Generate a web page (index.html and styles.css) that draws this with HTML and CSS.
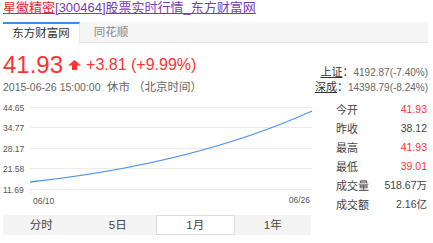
FILE: index.html
```html
<!DOCTYPE html>
<html>
<head>
    <title>星徽精密[300464]股票实时行情_东方财富网</title>
    <link rel="stylesheet" href="styles.css">
</head>
<body>
    <div class="page">
        <div class="title"><a class="name" href="#">星徽精密</a><a class="rest" href="#">[300464]股票实时行情_东方财富网</a></div>

        <div class="tabs">
            <div class="tab active">东方财富网</div>
            <div class="tab">同花顺</div>
        </div>

        <div class="quote">
            <div class="quote-left">
                <div class="price-row">
                    <span class="price">41.93</span>
                    <svg class="arrow" width="13" height="10" viewBox="0 0 13 10">
                        <path d="M6.5 0 L13 5.5 L9 5.5 L9 10 L4 10 L4 5.5 L0 5.5 Z" fill="#f33"/>
                    </svg>
                    <span class="change">+3.81 (+9.99%)</span>
                </div>
                <div class="time"><span class="stamp">2015-06-26 15:00:00</span>&nbsp;&nbsp;休市 （北京时间）</div>
            </div>
            <div class="indices">
                <div class="index"><a href="#">上证</a>：<span class="num">4192.87(-7.40%)</span></div>
                <div class="index"><a href="#">深成</a>：<span class="num">14398.79(-8.24%)</span></div>
            </div>
        </div>

        <div class="main">
            <svg class="chart" width="310" height="119" viewBox="0 0 310 119">
                <g stroke="#ebebeb" stroke-width="1">
                    <line x1="27" y1="11.5" x2="309" y2="11.5"/>
                    <line x1="27" y1="31.5" x2="309" y2="31.5"/>
                    <line x1="27" y1="52.5" x2="309" y2="52.5"/>
                    <line x1="27" y1="72.5" x2="309" y2="72.5"/>
                    <line x1="27" y1="93.5" x2="309" y2="93.5"/>
                    <line x1="28.5" y1="93" x2="28.5" y2="97"/>
                </g>
                <g class="axis">
                    <text x="0" y="14.5">44.65</text>
                    <text x="0" y="34.5">34.77</text>
                    <text x="0" y="55.5">28.17</text>
                    <text x="0" y="75.5">21.58</text>
                    <text x="0" y="96.5">11.69</text>
                    <text x="30" y="108">06/10</text>
                    <text x="307" y="107" text-anchor="end">06/26</text>
                </g>
                <path d="M27 86 C127 75 227 52 309 15" fill="none" stroke="#4f93f2" stroke-width="1.3"/>
            </svg>

            <div class="stats">
                <div class="row"><span>今开</span><span class="up">41.93</span></div>
                <div class="row"><span>昨收</span><span class="val">38.12</span></div>
                <div class="row"><span>最高</span><span class="up">41.93</span></div>
                <div class="row"><span>最低</span><span class="up">39.01</span></div>
                <div class="row"><span>成交量</span><span class="val">518.67万</span></div>
                <div class="row"><span>成交额</span><span class="val">2.16亿</span></div>
            </div>
        </div>

        <div class="periods">
            <div class="period">分时</div>
            <div class="period">5日</div>
            <div class="period active">1月</div>
            <div class="period">1年</div>
        </div>
    </div>
</body>
</html>
```

FILE: styles.css
```css
body {
    margin: 0;
    font-family: 'Liberation Sans', 'Noto Sans CJK SC', sans-serif;
    color: #333;
    background-color: #fff;
}
.page {
    width: 425px;
    padding-left: 3px;
}
.title {
    height: 16px;
    line-height: 16px;
    font-size: 13px;
    white-space: nowrap;
}
.title a {
    text-decoration: underline;
}
.title .name {
    color: #e8262d;
}
.title .rest {
    color: #7a3cb8;
}
.tabs {
    display: flex;
    margin-top: 6px;
    height: 20px;
    background-color: #f5f5f5;
    border-bottom: 1px solid #e4e4e4;
}
.tab {
    width: 62px;
    line-height: 20px;
    font-size: 11.5px;
    color: #888;
    text-align: center;
}
.tab.active {
    width: 76px;
    height: 19px;
    line-height: 19px;
    background-color: #fff;
    color: #333;
    border-top: 2px solid #3b8de6;
    border-right: 1px solid #e8e8e8;
    margin-bottom: -1px;
    padding-bottom: 1px;
}
.quote {
    display: flex;
    justify-content: space-between;
    align-items: flex-end;
    height: 53px;
}
.quote-left {
    padding-bottom: 2px;
}
.price-row {
    display: flex;
    align-items: center;
    height: 28px;
    color: #f33;
}
.price {
    font-size: 24px;
}
.arrow {
    margin: 0 5px 0 5px;
}
.change {
    font-size: 16px;
}
.time {
    margin-top: 1px;
    height: 14px;
    line-height: 14px;
    font-size: 11.5px;
    color: #666;
}
.stamp {
    font-size: 10.5px;
}
.indices {
    padding-bottom: 1px;
    text-align: right;
}
.index {
    line-height: 15px;
    font-size: 11px;
    color: #333;
}
.index a {
    color: #333;
    text-decoration: underline;
}
.index .num {
    font-size: 10px;
    color: #666;
}
.main {
    display: flex;
    height: 119px;
}
.chart {
    display: block;
}
.axis text {
    font-family: 'Liberation Sans', sans-serif;
    font-size: 8.5px;
    fill: #555;
}
.stats {
    margin-left: 23px;
    width: 91px;
    padding-top: 3px;
}
.row {
    display: flex;
    justify-content: space-between;
    align-items: center;
    height: 19px;
    font-size: 11px;
    color: #444;
}
.row .up,
.row .val {
    font-size: 10.5px;
}
.row .up {
    color: #f33;
}
.periods {
    display: flex;
    width: 308px;
    height: 20px;
    background-color: #f4f4f4;
}
.period {
    flex: 1;
    line-height: 20px;
    font-size: 11.5px;
    text-align: center;
    color: #444;
}
.period.active {
    background-color: #fff;
    border: 1px solid #ddd;
    line-height: 18px;
}
```
